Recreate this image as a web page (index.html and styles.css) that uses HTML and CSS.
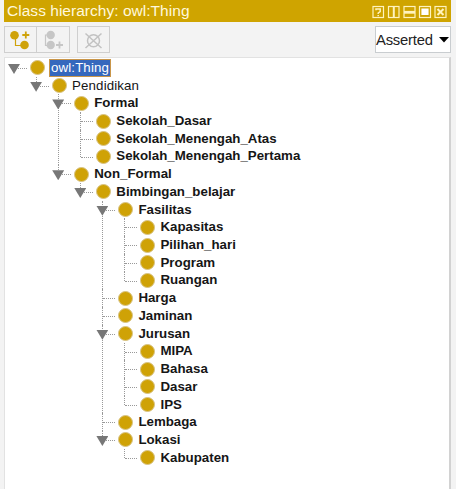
FILE: index.html
```html
<!DOCTYPE html>
<html lang="id">
<head>
<meta charset="utf-8">
<title>Class hierarchy</title>
<link rel="stylesheet" href="styles.css">
</head>
<body>
<main class="panel">
<header class="titlebar">
<h1 class="title">Class hierarchy: owl:Thing</h1>
<svg class="window-icons" width="76" height="14" viewBox="0 0 76 14" fill="none" stroke="#fff3bd" stroke-width="1.2">
<rect x="1" y="1.5" width="10.5" height="11"/><path d="M4 5.2V4h4.2v2.500L6.200 8v1M6.200 10v1.300" stroke-width="1.500"/>
<rect x="16.5" y="1.5" width="10.5" height="11"/><path d="M21.8 2v10" stroke-width="2"/>
<rect x="32" y="1.5" width="11" height="11"/><path d="M32 7.3h11" stroke-width="2.8"/>
<rect x="47.5" y="1.5" width="11" height="11"/><path d="M50 4h6v5.5h-6z" fill="#fff" stroke="#fff"/>
<rect x="63" y="1.5" width="11" height="11"/><path d="M65.5 4l6 6M71.5 4l-6 6" stroke-width="2"/>
</svg>
</header>
<div class="toolbar">
<div class="group">
<button class="tool"><svg width="31" height="24" viewBox="0 0 31 24" fill="none" stroke="#cfa20a"><path d="M10.500 8v9.500h9" stroke-width="1.200"/><circle cx="9.500" cy="7.200" r="4.300" fill="#cfa20a" stroke="none"/><circle cx="19.500" cy="17" r="4.300" fill="#cfa20a" stroke="none"/><path d="M20.800 3.500v7M17.300 7h7" stroke-width="1.800"/></svg></button>
<button class="tool"><svg width="31" height="24" viewBox="0 0 31 24" fill="none" stroke="#c6c6c6"><path d="M14 7H8.500v10.500H13" stroke-width="1.200"/><circle cx="13.700" cy="7" r="4.200" fill="#c6c6c6" stroke="none"/><circle cx="13.700" cy="17" r="4.200" fill="#c6c6c6" stroke="none"/><path d="M22.500 13.500v7M19 17h7" stroke-width="1.800"/></svg></button>
</div>
<div class="group">
<button class="tool"><svg width="31" height="24" viewBox="0 0 31 24" fill="none" stroke="#c2c2c2" stroke-width="1.500"><circle cx="15.500" cy="12.800" r="6"/><path d="M7.500 5.500l16 14.500M23.500 5.500l-16 14.500"/></svg></button>
</div>
<div class="select"><span class="asserted">Asserted</span><svg width="10" height="6" viewBox="0 0 10 6"><path d="M0 0h10L5 5.500z" fill="#000"/></svg></div>
</div>
<ul class="tree">
<li class="open"><div class="row"><i class="dot"></i><span class="label plain selected">owl:Thing</span></div>
<ul>
<li class="open"><div class="row"><i class="dot"></i><span class="label plain">Pendidikan</span></div>
<ul>
<li class="open"><div class="row"><i class="dot"></i><span class="label">Formal</span></div>
<ul>
<li><div class="row"><i class="dot"></i><span class="label">Sekolah_Dasar</span></div></li>
<li><div class="row"><i class="dot"></i><span class="label">Sekolah_Menengah_Atas</span></div></li>
<li><div class="row"><i class="dot"></i><span class="label">Sekolah_Menengah_Pertama</span></div></li>
</ul></li>
<li class="open"><div class="row"><i class="dot"></i><span class="label">Non_Formal</span></div>
<ul>
<li class="open"><div class="row"><i class="dot"></i><span class="label">Bimbingan_belajar</span></div>
<ul>
<li class="open"><div class="row"><i class="dot"></i><span class="label">Fasilitas</span></div>
<ul>
<li><div class="row"><i class="dot"></i><span class="label">Kapasitas</span></div></li>
<li><div class="row"><i class="dot"></i><span class="label">Pilihan_hari</span></div></li>
<li><div class="row"><i class="dot"></i><span class="label">Program</span></div></li>
<li><div class="row"><i class="dot"></i><span class="label">Ruangan</span></div></li>
</ul></li>
<li><div class="row"><i class="dot"></i><span class="label">Harga</span></div></li>
<li><div class="row"><i class="dot"></i><span class="label">Jaminan</span></div></li>
<li class="open"><div class="row"><i class="dot"></i><span class="label">Jurusan</span></div>
<ul>
<li><div class="row"><i class="dot"></i><span class="label">MIPA</span></div></li>
<li><div class="row"><i class="dot"></i><span class="label">Bahasa</span></div></li>
<li><div class="row"><i class="dot"></i><span class="label">Dasar</span></div></li>
<li><div class="row"><i class="dot"></i><span class="label">IPS</span></div></li>
</ul></li>
<li><div class="row"><i class="dot"></i><span class="label">Lembaga</span></div></li>
<li class="open"><div class="row"><i class="dot"></i><span class="label">Lokasi</span></div>
<ul>
<li><div class="row"><i class="dot"></i><span class="label">Kabupaten</span></div></li>
</ul></li>
</ul></li>
</ul></li>
</ul></li>
</ul></li>
</ul>
</main>
</body>
</html>
```
FILE: styles.css
```css
* { box-sizing: border-box; }
body {
  margin: 0;
  height: 489px;
  overflow: hidden;
  background: #f3f3f3;
  font-family: "Liberation Sans", Arial, sans-serif;
}
.panel {
  display: flex;
  flex-direction: column;
  height: 489px;
  margin: 0 5px 0 4px;
}
.titlebar {
  display: flex;
  align-items: center;
  justify-content: space-between;
  height: 22px;
  padding: 0 3px 0 3px;
  background: #cfa400;
}
.title {
  margin: 0;
  color: #fff8dc;
  font-size: 15.5px;
  font-weight: 400;
  letter-spacing: 0.03px;
  line-height: 22px;
  white-space: nowrap;
}
.window-icons { margin-top: 1px; }
.toolbar {
  display: flex;
  align-items: flex-start;
  gap: 7px;
  height: 35px;
  padding-top: 4px;
}
.group { display: flex; }
.tool {
  width: 33px;
  height: 27px;
  padding: 0;
  border: 1px solid #cfcfcf;
  background: #f3f3f3;
}
.tool svg { display: block; }
.tool + .tool {
  width: 34px;
  margin-left: -1px;
}
.select {
  display: flex;
  align-items: center;
  justify-content: space-between;
  width: 76px;
  height: 27px;
  margin-left: auto;
  padding-right: 1px;
  border: 1px solid #c9cdd0;
  background: #fff;
  color: #222;
}
.asserted {
  font-size: 14.8px;
  letter-spacing: -0.2px;
}
.select svg { flex: none; }
.tree {
  flex: 1;
  border: solid #e2e2e2;
  border-width: 1px 2px 0 1px;
  border-right-color: #d2d2d2;
  background: #fff;
}
ul {
  margin: 0;
  padding: 0;
  list-style: none;
}
ul ul { margin-left: 22.1px; }
li { position: relative; }
.tree > li { margin-top: 1px; }
.row {
  display: flex;
  align-items: center;
  height: 17.73px;
  padding-left: 25px;
}
.dot {
  flex: none;
  width: 15px;
  height: 15px;
  border: 1px solid #d8c384;
  border-radius: 50%;
  background: #cfa206;
}
.label {
  margin-left: 5px;
  color: #161616;
  font-size: 13.3px;
  font-weight: 700;
  letter-spacing: 0;
  line-height: 16px;
  white-space: nowrap;
}
.plain {
  font-weight: 400;
  letter-spacing: 0.12px;
}
.selected {
  height: 18px;
  margin-left: 4px;
  padding: 0 1px;
  border: 1px solid #c9964a;
  background: #3568bd;
  color: #fff;
}
/* branch guides */
li li::before {
  content: "";
  position: absolute;
  top: 0;
  left: 9px;
  height: 100%;
  border-left: 1px dotted #999;
}
li li:last-child::before { height: 9px; }
.row::before {
  content: "";
  position: absolute;
  top: 9px;
  left: 10px;
  width: 12px;
  border-top: 1px dotted #999;
}
/* expanded handles */
.open > .row::after {
  content: "";
  position: absolute;
  top: 5px;
  left: 3px;
  width: 12px;
  height: 10px;
  background: #777;
  clip-path: polygon(0 0, 100% 0, 50% 100%);
}
```
